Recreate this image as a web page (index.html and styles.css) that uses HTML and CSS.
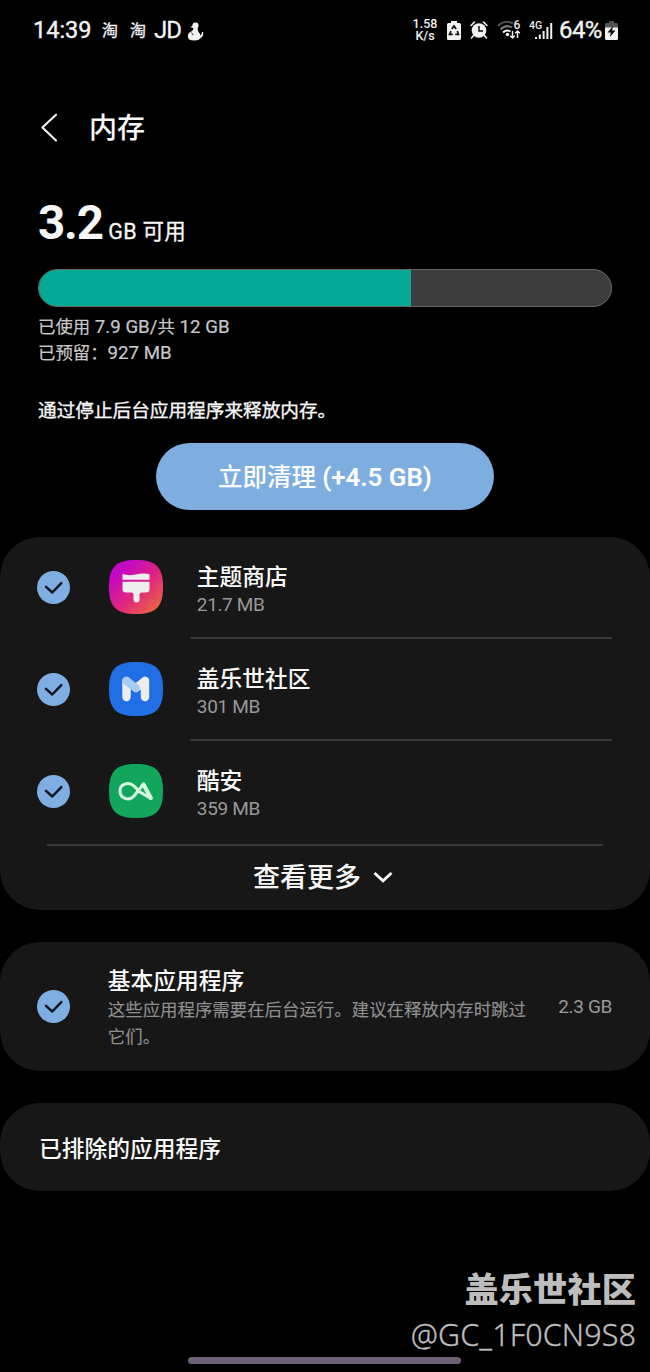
FILE: index.html
```html
<!DOCTYPE html>
<html lang="zh-CN">
<head>
<meta charset="utf-8">
<title>内存</title>
<link rel="stylesheet" href="styles.css">
</head>
<body>
<svg class="defs" width="0" height="0">
  <defs>
    <linearGradient id="theme" x1="0.1" y1="0.3" x2="0.75" y2="1">
      <stop offset="0" stop-color="#c408c6"/><stop offset="0.5" stop-color="#df2480"/><stop offset="1" stop-color="#ec5f48"/>
    </linearGradient>
    <symbol id="check" viewBox="0 0 33 33">
      <circle cx="16.5" cy="16.5" r="16.5" fill="#7eaee2"/>
      <path d="M9 15.900l6.300 5.600 9-9.400" fill="none" stroke="#10161d" stroke-width="2.500" stroke-linecap="round" stroke-linejoin="round"/>
    </symbol>
  </defs>
</svg>
<div class="screen">
  <div class="status">
    <div class="status-left">
      <span class="clock">14:39</span>
      <span class="tao">淘</span>
      <span class="tao tao2">淘</span>
      <span class="jd">JD</span>
      <svg class="person" width="17" height="19" viewBox="0 0 17 19" fill="#f2f2f2"><circle cx="8.500" cy="3.500" r="3.100"/><path d="M6 3.500L3.300 5.200 7 6.300zM6.500 6h4.200q-.4 2.500 .8 4 1.800 1.500 1.800 3.500 1.700-.8 1.700-3.500h1.200q.5 4.500-2.600 6Q12 18.500 7.500 18.500 .5 18.500 .8 14 1 10.500 4.300 9.500 6.500 8.500 6.500 6z"/><path d="M4.500 10.500l1.700 2.700" stroke="#000" stroke-width=".8"/></svg>
    </div>
    <div class="status-right">
      <span class="speed"><span>1.58</span><span>K/s</span></span>
      <svg class="recycle" width="14" height="19" viewBox="0 0 14 19"><path d="M4 2V0h6v2h2.500Q14 2 14 3.500v14Q14 19 12.500 19h-11Q0 19 0 17.500v-14Q0 2 1.500 2z" fill="#f2f2f2"/><path d="M4.800 8L7 5l2.200 3M10.300 10l1.200 3.300H8.300M5.800 13.300H2.500L4 10" fill="none" stroke="#111" stroke-width="1.700"/></svg>
      <svg class="alarm" width="18" height="18" viewBox="0 0 18 18"><circle cx="9" cy="9.500" r="7.300" fill="#f2f2f2"/><path d="M9 5v5h4" fill="none" stroke="#111" stroke-width="1.500"/><path d="M1 4.500L4.500 1M17 4.500L13.500 1M3.500 14.500L1.500 17M14.500 14.500l2 2.500" stroke="#f2f2f2" stroke-width="1.600" stroke-linecap="round"/></svg>
      <svg class="wifi" width="24" height="20" viewBox="0 0 24 20" fill="none"><path d="M.8 6C5 1.500 11 .8 16 3.500" stroke="#555" stroke-width="2"/><path d="M3.500 9.500Q9 4 15 7.500" stroke="#777" stroke-width="2"/><path d="M6 12.500Q9.500 9 13.500 11.500" stroke="#eee" stroke-width="2"/><circle cx="10.500" cy="14.500" r="1.800" fill="#eee"/><path d="M15.500 11v7m-2.300-2.300l2.300 2.300 2.300-2.300M20.500 18v-7m-2.300 2.300l2.300-2.300 2.300 2.300" stroke="#eee" stroke-width="1.500"/><text x="16.500" y="9" class="tiny" font-size="12">6</text></svg>
      <svg class="signal" width="24" height="20" viewBox="0 0 24 20"><text x="-1" y="9" class="tiny" font-size="10.500">4G</text><path d="M5 17h2v2H5zM8.800 14.500h2V19h-2zM12.600 11h2v8h-2zM16.400 7h2v12h-2zM20.200 3h2v16h-2z" fill="#f2f2f2"/></svg>
      <span class="percent">64%</span>
      <svg class="battery" width="13" height="19" viewBox="0 0 13 19"><path d="M4 2V0h5v2h2.500Q13 2 13 3.500V7H0V3.500Q0 2 1.500 2z" fill="#555"/><path d="M0 6.500h13v11Q13 19 11.500 19h-10Q0 19 0 17.500z" fill="#f2f2f2"/><path d="M8 5L2.500 11.500h3.200L5 16l5.500-6.500H7.200z" fill="#111"/></svg>
    </div>
  </div>

  <div class="header">
    <svg width="18" height="30" viewBox="0 0 18 30"><path d="M16 1.700L2.400 14.500l13.600 13" fill="none" stroke="#f5f5f5" stroke-width="2.100" stroke-linecap="round" stroke-linejoin="round"/></svg>
    <h1>内存</h1>
  </div>

  <div class="summary">
    <div class="available"><span class="amount">3.2</span><span class="unit">GB 可用</span></div>
    <div class="bar"><div class="used"></div></div>
    <div class="detail">已使用<span> 7.9 GB/</span>共<span> 12 GB</span></div>
    <div class="detail">已预留：<span>927 MB</span></div>
    <div class="hint">通过停止后台应用程序来释放内存。</div>
    <button class="clean">立即清理 <span>(+4.5 GB)</span></button>
  </div>

  <div class="card apps">
    <div class="row">
      <svg class="check" width="33" height="33"><use href="#check"/></svg>
      <svg class="icon" width="54" height="54" viewBox="0 0 54 54"><path d="M27 0C47 0 54 7 54 27S47 54 27 54 0 47 0 27 7 0 27 0z" fill="url(#theme)"/><path d="M13.500 14q6 2 13 .5t14-.5v5.800h-27zM13.500 21.800h27V29q0 3.500-3.500 3.500h-4q-2.500 0-2.500 2V39q0 3.500-3 3.500t-3-3.500v-4.500q0-2-2.500-2h-5q-3.500 0-3.500-3.500z" fill="#eee"/></svg>
      <div class="info"><div class="name">主题商店</div><div class="size">21.7 MB</div></div>
    </div>
    <div class="row">
      <svg class="check" width="33" height="33"><use href="#check"/></svg>
      <svg class="icon" width="54" height="54" viewBox="0 0 54 54"><path d="M27 0C47 0 54 7 54 27S47 54 27 54 0 47 0 27 7 0 27 0z" fill="#216fe4"/><g fill="none" stroke-width="8.400" stroke-linecap="round" stroke-linejoin="round"><path d="M17.500 19v16M36 19v16" stroke="#eeeef0"/><path d="M27 26l9-7" stroke="#eeeef0"/><path d="M17.500 19l9.300 7" stroke="#a5cdf1"/></g></svg>
      <div class="info"><div class="name">盖乐世社区</div><div class="size">301 MB</div></div>
    </div>
    <div class="row last">
      <svg class="check" width="33" height="33"><use href="#check"/></svg>
      <svg class="icon" width="54" height="54" viewBox="0 0 54 54"><path d="M27 0C47 0 54 7 54 27S47 54 27 54 0 47 0 27 7 0 27 0z" fill="#12a65c"/><g fill="none" stroke="#d7fae5" stroke-linecap="round" stroke-linejoin="round"><path d="M34.500 20L25 32C20 37.500 11 34.500 11 27S20 17.500 25 22l5.500 5.700L42 34.500z" stroke-width="3"/><path d="M34.500 20.500l7.300 13.500" stroke-width="4"/></g></svg>
      <div class="info"><div class="name">酷安</div><div class="size">359 MB</div></div>
    </div>
    <div class="more"><span>查看更多</span><svg width="20" height="12" viewBox="0 0 20 12"><path d="M1.500 1L10 8.800l8.500-7.800" fill="none" stroke="#fff" stroke-width="2.800"/></svg></div>
  </div>

  <div class="card basic">
    <svg class="check" width="33" height="33"><use href="#check"/></svg>
    <div class="basic-text"><div class="name">基本应用程序</div><div class="desc">这些应用程序需要在后台运行。建议在释放内存时跳过它们。</div></div>
    <span class="basic-size">2.3 GB</span>
  </div>

  <div class="card excluded"><span class="name">已排除的应用程序</span></div>

  <div class="watermark"><div class="community">盖乐世社区</div><div class="user">@GC_1F0CN9S8</div></div>
  <div class="gesture"></div>
</div>
</body>
</html>
```
FILE: styles.css
```css
* { box-sizing: border-box; }
body { margin: 0; background: #000; }
.defs { display: block; }
svg { flex: none; display: block; overflow: visible; }
.screen {
  width: 650px;
  height: 1372px;
  overflow: hidden;
  background: #000;
  color: #f7f7f7;
  font-family: Roboto, "Noto Sans CJK SC", sans-serif;
  display: flex;
  flex-direction: column;
  white-space: nowrap;
}

/* Status bar */
.status { height: 60px; flex: none; display: flex; justify-content: space-between; align-items: center; padding: 0 32px 0 33px; color: #f2f2f2; }
.status-left, .status-right { display: flex; align-items: center; }
.clock { font-size: 23.500px; width: 69px; -webkit-text-stroke: .4px; }
.tao { font-size: 16px; line-height: 20px; width: 28px; padding-top: 2px; -webkit-text-stroke: .3px; }
.tao2 { width: 24px; }
.jd { font-size: 24px; width: 33px; letter-spacing: -1px; -webkit-text-stroke: .3px; }
.person { margin-top: 3px; }
.speed { display: flex; flex-direction: column; align-items: center; font-size: 12.500px; font-weight: 500; width: 26px; margin-right: 9px; }
.speed span { line-height: 12.500px; }
.recycle { margin-right: 9px; }
.alarm { margin-right: 9px; }
.wifi { margin-right: 9px; }
.signal { margin-right: 5px; }
.percent { font-size: 24px; width: 46px; letter-spacing: -.6px; -webkit-text-stroke: .4px; }
.tiny { fill: #eee; font-family: Roboto, sans-serif; font-weight: 500; }

/* Title */
.header { height: 136px; flex: none; display: flex; align-items: center; padding: 0 40px; gap: 31px; }
.header h1 { margin: 0; padding-top: 2px; font-size: 28px; line-height: 40px; font-weight: 500; }

/* Memory summary */
.summary { height: 341px; flex: none; padding: 0 38px; display: flex; flex-direction: column; }
.available { height: 73px; line-height: 54px; display: flex; align-items: baseline; gap: 5.500px; }
.amount { font-size: 47.500px; font-weight: 700; letter-spacing: -1.200px; }
.unit { font-size: 21.500px; letter-spacing: .3px; -webkit-text-stroke: .3px; }
.bar { height: 38px; border: 1px solid #696969; border-radius: 19px; background: #3c3c3c; overflow: hidden; margin-bottom: 8px; flex: none; }
.used { width: 65.100%; height: 100%; background: #05a995; }
.detail { font-size: 17.400px; line-height: 25.500px; color: #c8c8c8; -webkit-text-stroke: .2px; }
.detail span { font-size: 18.700px; }
.hint { font-size: 18.650px; line-height: 28px; margin-top: 31px; -webkit-text-stroke: .35px; }
.clean { width: 338px; height: 67px; margin: 18px 0 0 118px; padding: 1px 0 0; border: 0; border-radius: 34px; background: #7eaee0; color: #fff; font: 500 24.500px/38px Roboto, "Noto Sans CJK SC", sans-serif; flex: none; }
.clean span { font-weight: 600; font-size: 25.900px; }

/* Cards */
.card { background: #171717; border-radius: 40px; flex: none; }
.name { font-size: 22.750px; line-height: 32px; font-weight: 500; color: #fafafa; }
.size { font-size: 19px; line-height: 22px; color: #999; letter-spacing: -.35px; }
.apps { height: 373px; }
.row { height: 102.200px; display: flex; padding-left: 37px; }
.row .check { margin-top: 34px; }
.icon { margin: 23px 27px 0 39px; }
.info { flex: 1; margin-right: 38px; padding: 25px 0 0 6.800px; border-bottom: 2px solid #383838; }
.last .info { border-bottom: 0; }
.more { margin: 0 47px; height: 65px; border-top: 2px solid #383838; display: flex; justify-content: center; align-items: center; gap: 12px; padding: 1px 4px 0 0; font-size: 27px; font-weight: 500; line-height: 40px; }
.basic { margin-top: 32px; height: 129px; display: flex; align-items: center; padding: 0 38px 0 37px; }
.basic-text { width: 430px; margin-left: 37.800px; padding-top: 4px; }
.basic .name { line-height: 31px; }
.desc { font-size: 17.430px; line-height: 27px; color: #8f8f8f; width: 422px; white-space: normal; -webkit-text-stroke: .15px; }
.basic-size { font-size: 19px; letter-spacing: -.35px; color: #999; margin-left: auto; }
.excluded { margin-top: 32px; height: 88px; display: flex; align-items: center; padding: 5px 39px 0; }

/* Watermark and navigation handle */
.watermark { margin-top: 75px; padding-right: 14px; display: flex; flex-direction: column; align-items: flex-end; color: #bdbdbd; }
.community { font-size: 34.300px; line-height: 48px; font-weight: 900; }
.user { font-family: "Noto Sans", sans-serif; font-size: 30.500px; line-height: 40px; font-weight: 300; letter-spacing: .1px; -webkit-text-stroke: .35px; }
.gesture { width: 273px; height: 7px; border-radius: 4px; background: #6c6177; margin: auto 0 8px 188px; flex: none; }
```
